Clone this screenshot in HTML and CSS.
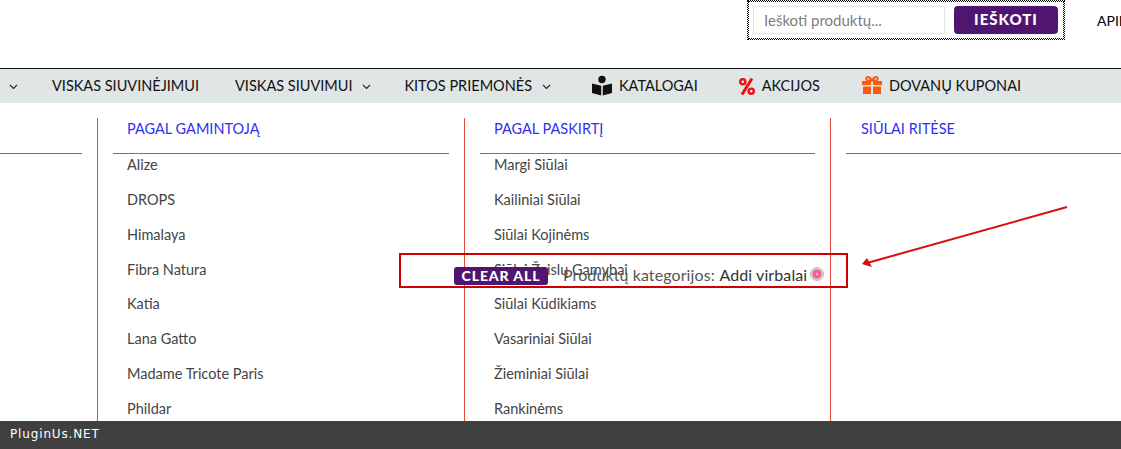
FILE: index.html
```html
<!DOCTYPE html>
<html lang="lt">
<head>
<meta charset="utf-8">
<title>Siūlai</title>
<link rel="stylesheet" href="styles.css">
</head>
<body>
<header class="top">
  <form class="search">
    <div class="search-input">Ieškoti produktų...</div>
    <div class="search-btn">IEŠKOTI</div>
  </form>
  <div class="top-link">APIE</div>
</header>
<nav class="nav">
  <svg class="chev first" viewBox="0 0 10 6"><path d="M1 1l4 4 4-4"/></svg>
  <a class="nav-item i1">VISKAS SIUVINĖJIMUI</a>
  <a class="nav-item i2">VISKAS SIUVIMUI <svg class="chev" viewBox="0 0 10 6"><path d="M1 1l4 4 4-4"/></svg></a>
  <a class="nav-item i3">KITOS PRIEMONĖS <svg class="chev" viewBox="0 0 10 6"><path d="M1 1l4 4 4-4"/></svg></a>
  <a class="nav-item i4">
    <svg class="ico book" viewBox="0 0 20 20"><circle cx="10" cy="4" r="3.7"/><path d="M0 8l9.200 2.200V20L0 17.600zM20 8l-9.200 2.200V20l9.200-2.400z"/></svg>
    KATALOGAI</a>
  <a class="nav-item i5">
    <svg class="ico pct" viewBox="0 0 16 18"><path class="pct-line" d="M13 1L3 17"/><circle class="pct-ring" cx="3.800" cy="4.300" r="2.600"/><circle class="pct-ring" cx="12.200" cy="13.700" r="2.600"/></svg>
    AKCIJOS</a>
  <a class="nav-item i6">
    <svg class="ico gift" viewBox="0 0 20 18"><path d="M0 5h9v4H0zM11 5h9v4h-9zM1 10.500h8V18H1zM11 10.500h8V18h-8z"/><path class="gift-bow" d="M10 4.500C8 1 6 .8 5 1.200 3.700 1.800 4 4 5.500 4.500zM10 4.500C12 1 14 .8 15 1.200c1.300.6 1 2.800-.5 3.300z"/></svg>
    DOVANŲ KUPONAI</a>
</nav>
<main class="mega">
  <section class="col col-a"><div class="col-head"></div></section>
  <section class="col">
    <div class="col-head">PAGAL GAMINTOJĄ</div>
    <ul class="list">
      <li>Alize</li><li>DROPS</li><li>Himalaya</li><li>Fibra Natura</li><li>Katia</li><li>Lana Gatto</li><li>Madame Tricote Paris</li><li>Phildar</li>
    </ul>
  </section>
  <section class="col col-c">
    <div class="col-head">PAGAL PASKIRTĮ</div>
    <ul class="list">
      <li>Margi Siūlai</li><li>Kailiniai Siūlai</li><li>Siūlai Kojinėms</li><li>Siūlai Žaislų Gamybai</li><li>Siūlai Kūdikiams</li><li>Vasariniai Siūlai</li><li>Žieminiai Siūlai</li><li>Rankinėms</li>
    </ul>
  </section>
  <section class="col col-d"><div class="col-head">SIŪLAI RITĖSE</div></section>
</main>
<div class="marker"></div>
<div class="clear-btn">CLEAR ALL</div>
<div class="filter-text"><span class="filter-key">Produktų kategorijos:</span> Addi virbalai</div>
<svg class="filter-x" viewBox="0 0 14 14"><circle class="x-ring" cx="7" cy="7" r="6.300"/><circle class="x-fill" cx="7" cy="7" r="4.800"/><path class="x-mark" d="M5.900 5.900l2.200 2.200M8.100 5.900l-2.200 2.200"/></svg>
<svg class="arrow" viewBox="0 0 220 70"><path class="arrow-line" d="M207 3L7 59"/><path class="arrow-head" d="M2 60l5-6 5 9z"/></svg>
<footer class="foot">PluginUs.NET</footer>
</body>
</html>
```
FILE: styles.css
```css
* { box-sizing: border-box; }
html, body { margin: 0; padding: 0; }
body {
  width: 1121px;
  height: 449px;
  overflow: hidden;
  position: relative;
  background: #fff;
  font-family: Lato, sans-serif;
  color: #333;
}
.top {
  height: 68px;
  padding: 1px 0 0 748px;
  display: flex;
  align-items: flex-start;
  white-space: nowrap;
}
.search {
  width: 316px;
  height: 38px;
  border: 1px dotted #000;
  outline: 1px dotted #000;
  padding: 4px 5px 0 4px;
  display: flex;
  gap: 9px;
  flex: none;
}
.search-input {
  width: 192px;
  height: 28px;
  border: 1px solid #e3e3e3;
  padding-left: 10px;
  font-size: 15px;
  line-height: 26px;
  color: #7d7d7d;
}
.search-btn {
  width: 104px;
  height: 28px;
  border-radius: 4px;
  background: #50166f;
  color: #fff;
  font-weight: 900;
  font-size: 15px;
  line-height: 27px;
  letter-spacing: 1px;
  text-align: center;
}
.top-link {
  margin-left: 33px;
  padding-top: 11px;
  font-size: 14px;
  color: #000;
}
.nav {
  height: 35px;
  border-top: 1px solid #111;
  background: #e0e5e5;
  display: flex;
  align-items: center;
  font-size: 14.500px;
  color: #111;
  white-space: nowrap;
  padding-bottom: 2px;
}
.nav-item { display: flex; align-items: center; flex: none; }
.chev { width: 9px; height: 5.400px; margin-top: 3px; fill: none; stroke: #222; stroke-width: 1.300; flex: none; }
.chev.first { margin-left: 9px; margin-right: 34px; }
.nav-item .chev { margin-left: 10px; }
.i1 { margin-right: 36px; }
.i2 { margin-right: 33px; }
.i3 { margin-right: 41px; }
.i4 { margin-right: 41px; }
.i5 { margin-right: 42px; }
.ico { flex: none; margin-right: 7px; }
.book { width: 20px; height: 21px; fill: #111; }
.pct { width: 16px; height: 19px; margin-top: 3px; }
.pct-line { stroke: #f00d0d; stroke-width: 3; fill: none; }
.pct-ring { stroke: #f00d0d; stroke-width: 2.400; fill: none; }
.gift { width: 20px; height: 18px; fill: #ff5a0c; }
.gift-bow { fill: none; stroke: #ff5a0c; stroke-width: 1.800; }
.mega {
  display: flex;
  padding-top: 15px;
  height: 318px;
  overflow: hidden;
}
.col {
  flex: none;
  width: 367px;
  height: 303px;
  border-right: 1px solid #e14b3d;
  padding: 0 15px;
}
.col-a { width: 98px; padding: 0 15px 0 0; }
.col-c { width: 366px; }
.col-d { width: 290px; border-right: 0; padding-right: 0; }
.col-head {
  height: 36px;
  border-bottom: 1px solid #e14b3d;
  padding-left: 14px;
  font-size: 14.500px;
  line-height: 22px;
  color: #3030f0;
}
.col-d .col-head { padding-left: 15px; }
.col-a .col-head { padding: 0; }
.list { list-style: none; margin: 0; padding: .2px 0 0 14px; font-size: 14.500px; color: #444; }
.list li { height: 34.800px; line-height: 21px; }
.marker {
  position: absolute;
  left: 399px; top: 253px;
  width: 449px; height: 35px;
  border: 2px solid #d00000;
}
.clear-btn {
  position: absolute;
  left: 454px; top: 267px;
  width: 94px; height: 18px;
  border-radius: 3px;
  background: #50166f;
  color: #fff;
  font-weight: 900;
  font-size: 14px;
  line-height: 18px;
  letter-spacing: .9px;
  text-align: center;
}
.filter-text {
  position: absolute;
  left: 563px; top: 265px;
  font-size: 16px;
  letter-spacing: .1px;
  line-height: 20px;
  color: #333;
  white-space: nowrap;
}
.filter-key { color: #555; margin-right: 1px; }
.filter-x { position: absolute; left: 810px; top: 267px; width: 14px; height: 14px; }
.x-ring { fill: #e8e8e8; stroke: #a5a5a5; stroke-width: 1; }
.x-fill { fill: #f5648a; }
.x-mark { stroke: #ffc4d4; stroke-width: .8; }
.arrow { position: absolute; left: 860px; top: 204px; width: 220px; height: 70px; }
.arrow-line { stroke: #d80e0e; stroke-width: 2; fill: none; }
.arrow-head { fill: #d80e0e; }
.foot {
  position: absolute;
  left: 0; right: 0; bottom: 0;
  height: 28px;
  background: #404040;
  color: #fff;
  font-family: "DejaVu Sans", sans-serif;
  font-size: 12px;
  line-height: 27px;
  letter-spacing: .85px;
  padding-left: 10px;
}
```
